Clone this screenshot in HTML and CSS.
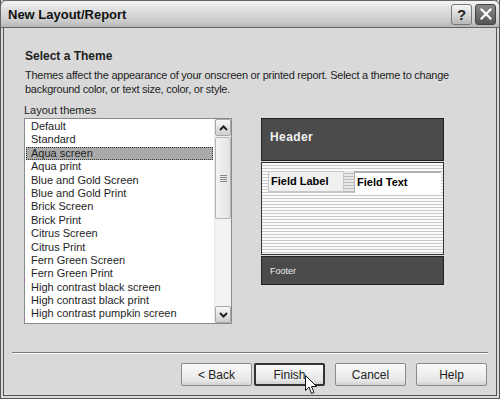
FILE: index.html
```
<!DOCTYPE html>
<html lang="en">
<head>
    <meta charset="UTF-8">
    <title>New Layout/Report</title>
    <link rel="stylesheet" href="styles.css">
</head>
<body>

    <div class="window">

        <!-- Title bar -->
        <div class="titlebar">
            <span class="title">New Layout/Report</span>
            <div class="tb-buttons">
                <span class="tb-btn help">?</span>
                <span class="tb-btn close">
                    <svg width="12" height="12" viewBox="0 0 12 12">
                        <path d="M1.5 1.5 L10.5 10.5 M10.5 1.5 L1.5 10.5" stroke="#fff" stroke-width="2.2" stroke-linecap="square"/>
                    </svg>
                </span>
            </div>
        </div>

        <!-- Main content -->
        <div class="content">
            <h1>Select a Theme</h1>
            <p class="desc">Themes affect the appearance of your onscreen or printed report. Select a theme to change background color, or text size, color, or style.</p>

            <div class="main">
                <div class="list-col">
                    <div class="list-label">Layout themes</div>
                    <div class="listbox">
                        <ul class="items">
                            <li>Default</li>
                            <li>Standard</li>
                            <li class="selected">Aqua screen</li>
                            <li>Aqua print</li>
                            <li>Blue and Gold Screen</li>
                            <li>Blue and Gold Print</li>
                            <li>Brick Screen</li>
                            <li>Brick Print</li>
                            <li>Citrus Screen</li>
                            <li>Citrus Print</li>
                            <li>Fern Green Screen</li>
                            <li>Fern Green Print</li>
                            <li>High contrast black screen</li>
                            <li>High contrast black print</li>
                            <li>High contrast pumpkin screen</li>
                        </ul>
                        <div class="scrollbar">
                            <div class="sb-btn">
                                <svg width="9" height="6" viewBox="0 0 9 6"><path d="M1 5 L4.5 1.5 L8 5" fill="none" stroke="#222" stroke-width="2"/></svg>
                            </div>
                            <div class="sb-thumb">
                                <span class="grip"></span>
                            </div>
                            <div class="sb-track"></div>
                            <div class="sb-btn">
                                <svg width="9" height="6" viewBox="0 0 9 6"><path d="M1 1 L4.5 4.5 L8 1" fill="none" stroke="#222" stroke-width="2"/></svg>
                            </div>
                        </div>
                    </div>
                </div>

                <!-- Theme preview -->
                <div class="preview">
                    <div class="pv-header">Header</div>
                    <div class="pv-body">
                        <div class="pv-row">
                            <div class="pv-label">Field Label</div>
                            <div class="pv-gap"></div>
                            <div class="pv-text">Field Text</div>
                        </div>
                    </div>
                    <div class="pv-footer">Footer</div>
                </div>
            </div>
        </div>

        <!-- Buttons -->
        <div class="bottom">
            <div class="sep"></div>
            <div class="buttons">
                <button class="btn">&lt; Back</button>
                <button class="btn default">Finish</button>
                <button class="btn spaced">Cancel</button>
                <button class="btn spaced">Help</button>
            </div>
        </div>

        <!-- mouse pointer over Finish -->
        <svg class="cursor" width="13" height="20" viewBox="0 0 13 20">
            <path d="M0.5 0.5 L0.5 15.5 L4 12 L6.5 18.5 L9 17.5 L6.5 11.5 L11.5 11.5 Z" fill="#fff" stroke="#111" stroke-width="1"/>
        </svg>
    </div>

</body>
</html>
```

FILE: styles.css
```
* {
    margin: 0;
    padding: 0;
    box-sizing: border-box;
}

body {
    width: 500px;
    height: 399px;
    overflow: hidden;
    background-color: #d9d9d9;
    font-family: 'Liberation Sans', Arial, sans-serif;
    font-size: 11px;
    color: #1e1e1e;
}

/* Window frame */
.window {
    position: relative;
    width: 500px;
    height: 399px;
    display: flex;
    flex-direction: column;
    border: 4px double #555;
    border-top: none;
    background-color: #d9d9d9;
}

.titlebar {
    height: 28px;
    margin: 0 -4px;
    display: flex;
    align-items: center;
    justify-content: space-between;
    padding: 0 3px 0 7px;
    background: linear-gradient(#f4f4f4, #dedede 35%, #c9c9c9 80%, #b4b4b4);
    border: 1px solid #666;
    border-radius: 6px 6px 0 0;
}

.title {
    font-size: 13px;
    font-weight: bold;
    color: #111;
    padding-top: 1px;
}

.tb-buttons {
    display: flex;
    gap: 3px;
}

.tb-btn {
    width: 21px;
    height: 21px;
    border-radius: 3px;
    display: flex;
    align-items: center;
    justify-content: center;
    font-weight: bold;
    font-size: 15px;
}

.tb-btn.help {
    background: linear-gradient(#f6f6f6, #b8b8b8);
    border: 1px solid #777;
    color: #222;
}

.tb-btn.close {
    background: linear-gradient(#8a8a8a, #555);
    border: 1px solid #444;
}

/* Content */
.content {
    flex: 1;
    padding: 21px 20px 0 20px;
}

h1 {
    font-size: 12px;
    line-height: 14px;
    font-weight: bold;
    margin-left: 1px;
}

.desc {
    margin-top: 5px;
    margin-left: 1px;
    line-height: 14px;
    width: 460px;
    letter-spacing: -0.25px;
}

.main {
    display: flex;
    align-items: flex-start;
    gap: 29px;
    margin-top: 7px;
}

.list-label {
    line-height: 14px;
    margin-bottom: 1px;
}

.listbox {
    width: 208px;
    height: 206px;
    display: flex;
    border: 1px solid #8a8a8a;
    background-color: #fff;
}

.items {
    flex: 1;
    list-style: none;
    padding: 1px 1px 0 1px;
}

.items li {
    height: 13.4px;
    line-height: 13.4px;
    padding-left: 5px;
}

.items li.selected {
    background-color: #a9a9a9;
    outline: 1px dotted #333;
    outline-offset: -1px;
}

/* Scrollbar */
.scrollbar {
    width: 17px;
    display: flex;
    flex-direction: column;
    background-color: #f0f0f0;
    border-left: 1px solid #e8e8e8;
}

.sb-btn {
    height: 17px;
    display: flex;
    align-items: center;
    justify-content: center;
    background: linear-gradient(#f8f8f8, #cfcfcf);
    border: 1px solid #a8a8a8;
    border-radius: 2px;
}

.sb-thumb {
    height: 82px;
    margin-top: 1px;
    display: flex;
    align-items: center;
    justify-content: center;
    background: linear-gradient(90deg, #f4f4f4, #e2e2e2);
    border: 1px solid #b4b4b4;
    border-radius: 2px;
}

.grip {
    width: 7px;
    height: 7px;
    background: repeating-linear-gradient(#888 0 1px, transparent 1px 2px);
}

.sb-track {
    flex: 1;
    background-color: #f2f2f2;
}

/* Preview */
.preview {
    width: 183px;
    margin-top: 15px;
}

.pv-header {
    height: 43px;
    padding: 11px 0 0 8px;
    background-color: #4b4b4b;
    border: 1px solid #222;
    color: #f2f2f2;
    font-size: 12px;
    font-weight: bold;
    letter-spacing: 0.4px;
}

.pv-body {
    height: 93px;
    margin-top: 1px;
    padding: 8px 2px 0 6px;
    border: 1px solid #333;
    background: repeating-linear-gradient(#fafafa 0 2px, #c9c9c9 2px 3px);
}

.pv-row {
    display: flex;
    align-items: flex-start;
}

.pv-label {
    width: 76px;
    height: 21px;
    padding: 3px 0 0 2px;
    background-color: #f0f0f0;
    border: 1px solid #c8c8c8;
    font-weight: bold;
    color: #000;
}

.pv-gap {
    width: 10px;
    height: 21px;
    background: repeating-linear-gradient(#e8e8e8 0 2px, #bdbdbd 2px 3px);
}

.pv-text {
    flex: 1;
    height: 22px;
    padding: 3px 0 0 2px;
    background-color: #fff;
    border-top: 2px solid #b0b0b0;
    border-left: 1px solid #b0b0b0;
    font-weight: bold;
    color: #000;
}

.pv-footer {
    height: 29px;
    margin-top: 1px;
    padding: 9px 0 0 8px;
    background-color: #4b4b4b;
    border: 1px solid #222;
    color: #eee;
    font-size: 9px;
}

/* Bottom buttons */
.bottom {
    padding: 0 0 9px 8px;
}

.sep {
    margin-right: 8px;
    height: 2px;
    border-top: 1px solid #7a7a7a;
    border-bottom: 1px solid #fafafa;
}

.buttons {
    display: flex;
    justify-content: flex-end;
    margin-top: 9px;
    padding-right: 9px;
    gap: 2px;
}

.btn {
    width: 71px;
    height: 23px;
    font-family: 'Liberation Sans', Arial, sans-serif;
    font-size: 12px;
    color: #222;
    background: linear-gradient(#fafafa, #e6e6e6 80%, #d0d0d0);
    border: 1px solid #8a8a8a;
    border-radius: 2px;
}

.btn.default {
    border: 2px solid #333;
}

.btn.spaced {
    margin-left: 8px;
}

.cursor {
    position: absolute;
    left: 301px;
    top: 375px;
}
```
